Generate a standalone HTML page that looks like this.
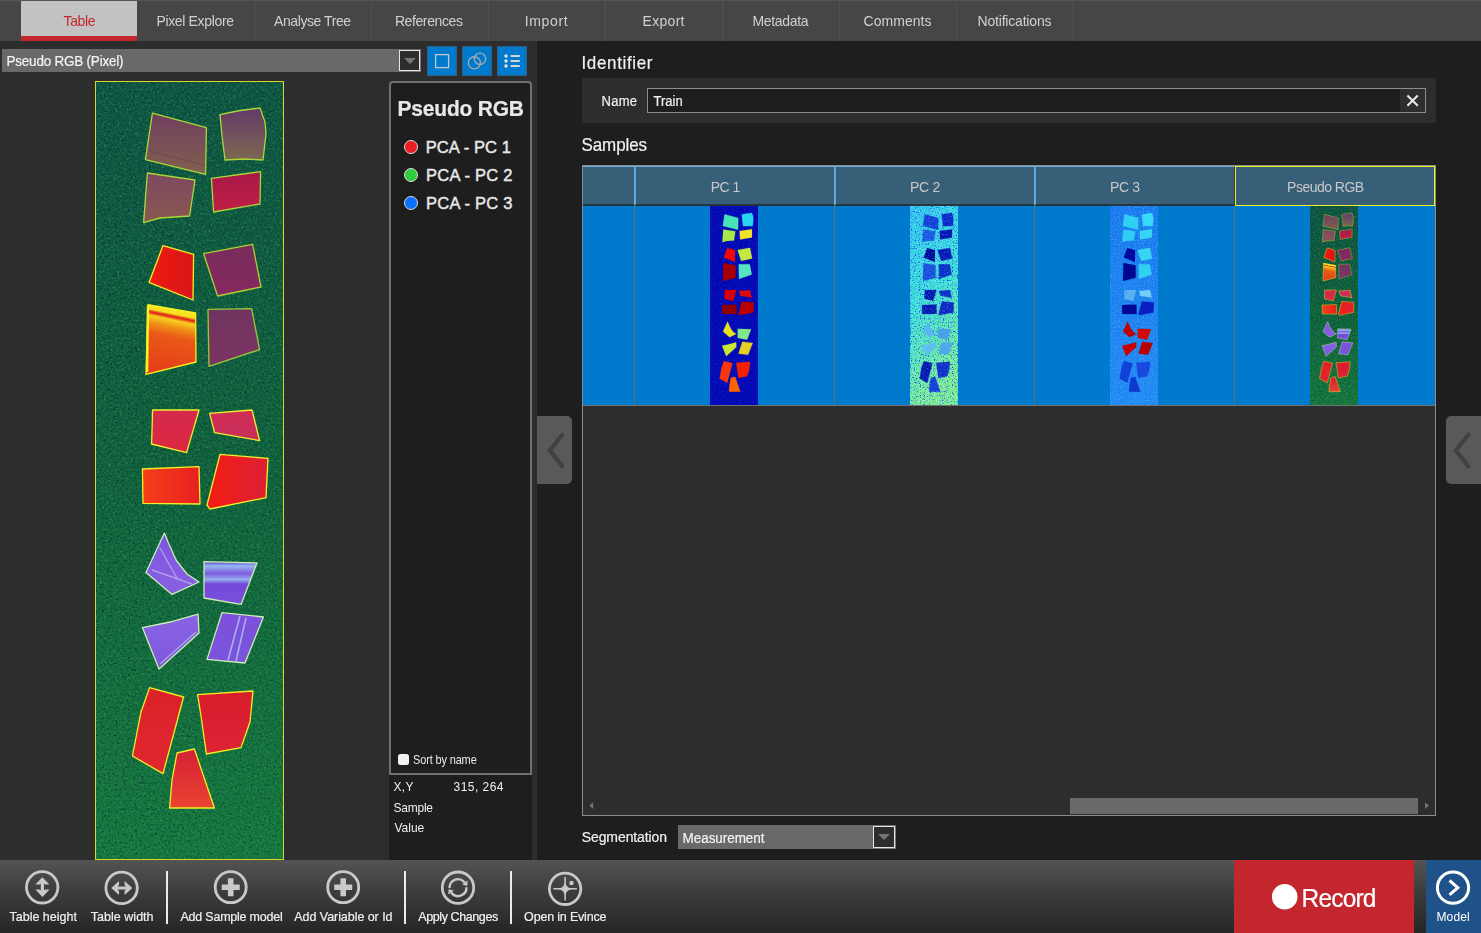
<!DOCTYPE html><html><head><meta charset="utf-8"><title>Table</title><style>
*{box-sizing:border-box;margin:0;padding:0}
html,body{width:1481px;height:933px;overflow:hidden;background:#1e1e1e}
body{position:relative;font-family:"Liberation Sans",sans-serif;color:#f0f0f0}
.a{position:absolute}
.t{position:absolute;white-space:pre;line-height:1;font-family:"Liberation Sans",sans-serif;-webkit-text-stroke:.2px}
#tabbar{left:0;top:0;width:1481px;height:41px;background:#464646;border-top:1px solid #555}
.tabsep{position:absolute;top:1px;width:1px;height:40px;background:#525252}
#tabsel{left:21px;top:1px;width:116px;height:40px;background:#c2c2c2;border-bottom:5px solid #c4262e}
#left{left:0;top:41px;width:537px;height:819px;background:#2d2d2d}
#dd1{left:2px;top:49px;width:419px;height:23px;background:#696969}
.ddbtn{position:absolute;background:#2d2d2d;border:1px solid #e6e6e6;box-shadow:1px 1px 0 #777}
.ddbtn i{position:absolute;left:50%;top:50%;margin:-3px 0 0 -6px;border-left:6px solid transparent;border-right:6px solid transparent;border-top:6px solid #747474;width:0;height:0}
.bb{position:absolute;top:46px;width:30px;height:30px;background:#007acc;border:1px solid #2f6088}
#legend{left:389px;top:81px;width:143px;height:694px;background:#1e1e1e;border:2px solid #707070;border-radius:4px 4px 0 0}
#info{left:389px;top:775px;width:143px;height:85px;background:#1e1e1e}
.dot{position:absolute;left:404px;width:14px;height:14px;border-radius:50%;border:1.5px solid #dcdcdc}
#chk{left:397.5px;top:753.8px;width:11.8px;height:11.5px;background:#f2f2f2;border-radius:2.5px}
.handle{position:absolute;top:416px;height:68px;width:35px;background:#595959}
#grp{left:582px;top:78px;width:854px;height:45px;background:#2d2d2d}
#inp{left:647px;top:88px;width:779px;height:25px;background:#1e1e1e;border:1px solid #8c8c8c}
#inpx{left:1400px;top:89px;width:25px;height:23px;background:#2d2d2d}
#tbl{left:582px;top:165px;width:854px;height:651px;background:#2d2d2d;border:1px solid #8c8c8c}
.hd{position:absolute;top:166px;height:40px;background:#385f78;border-top:1px solid #6cb2e4;border-left:2px solid #62aade;border-bottom:2px solid #27353f;border-right:1px solid #2a3f4e}
#row{left:583px;top:206px;width:852px;height:199px;background:#007acc}
#rowline{left:583px;top:405px;width:852px;height:1px;background:#707070}
.cs{position:absolute;top:206px;width:1px;height:199px;background:#6a6f74}
#sthumb{left:1070px;top:798px;width:348px;height:16px;background:#696969}
#dd2{left:678px;top:825px;width:218px;height:24px;background:#696969}
#tb{left:0;top:860px;width:1481px;height:73px;background:linear-gradient(#535353,#3c3c3c 45%,#252525)}
.sep{position:absolute;top:871px;width:2px;height:53px;background:#ececec}
#rec{left:1234px;top:860px;width:180px;height:73px;background:#c4262e}
#mod{left:1426px;top:860px;width:55px;height:73px;background:#1f5288}
svg{position:absolute;overflow:visible}
</style></head><body>
<div id="tabbar" class="a"></div><div id="tabsel" class="a"></div>
<div class="tabsep" style="left:254px"></div>
<div class="tabsep" style="left:371px"></div>
<div class="tabsep" style="left:488px"></div>
<div class="tabsep" style="left:605px"></div>
<div class="tabsep" style="left:722px"></div>
<div class="tabsep" style="left:839px"></div>
<div class="tabsep" style="left:956px"></div>
<div class="tabsep" style="left:1073px"></div>
<div id="left" class="a"></div><div id="dd1" class="a"></div>
<div class="ddbtn" style="left:399px;top:50px;width:21px;height:21px"><i></i></div>
<div class="bb" style="left:427px"></div><div class="bb" style="left:462px"></div><div class="bb" style="left:497px"></div>
<svg style="left:427px;top:46px" width="100" height="30" viewBox="427 46 100 30"><rect x="435.6" y="54.6" width="13" height="13" fill="none" stroke="#c4c8cc" stroke-width="1.3"/><circle cx="474.4" cy="62.8" r="6.1" fill="none" stroke="#a2a8ae" stroke-width="1.4"/><circle cx="480" cy="58.8" r="5.7" fill="none" stroke="#a2a8ae" stroke-width="1.4"/><g fill="#ece4d8"><circle cx="506" cy="56" r="1.7"/><circle cx="506" cy="61" r="1.7"/><circle cx="506" cy="66" r="1.7"/><rect x="510.6" y="55.1" width="9.2" height="1.8"/><rect x="510.6" y="60.1" width="9.2" height="1.8"/><rect x="510.6" y="65.1" width="9.2" height="1.8"/></g></svg>
<svg style="left:95px;top:81px" width="189" height="779" viewBox="95 81 189 779"><defs><linearGradient id="bgg" x1="0" y1="0" x2="0" y2="1"><stop offset="0" stop-color="#0e5443"/><stop offset="0.5" stop-color="#10623c"/><stop offset="1" stop-color="#167a3e"/></linearGradient><filter id="nz" x="0" y="0" width="100%" height="100%" color-interpolation-filters="sRGB"><feTurbulence type="fractalNoise" baseFrequency="0.45" numOctaves="2" seed="7"/><feColorMatrix type="matrix" values="0 0 0 0 0.2  0 0 0 0 0.6  0 0 0 0 0.34  1.9 0 0 0 -0.95"/></filter><filter id="nk" x="0" y="0" width="100%" height="100%" color-interpolation-filters="sRGB"><feTurbulence type="fractalNoise" baseFrequency="0.45" numOctaves="2" seed="31"/><feColorMatrix type="matrix" values="0 0 0 0 0.02  0 0 0 0 0.17  0 0 0 0 0.2  0 1.7 0 0 -0.85"/></filter><filter id="nd" x="0" y="0" width="100%" height="100%" color-interpolation-filters="sRGB"><feTurbulence type="fractalNoise" baseFrequency="0.85" numOctaves="1" seed="23"/><feColorMatrix type="matrix" values="0 0 0 0 0.03  0 0 0 0 0.06  0 0 0 0 0.28  0 0 14 0 -9.7"/></filter><linearGradient id="lm" x1="0" y1="0" x2="1" y2="0"><stop offset="0" stop-color="#fff"/><stop offset="0.3" stop-color="#fff" stop-opacity="0.8"/><stop offset="0.55" stop-color="#fff" stop-opacity="0.12"/><stop offset="1" stop-color="#fff" stop-opacity="0.1"/></linearGradient><mask id="mk"><rect x="95" y="81" width="189" height="779" fill="url(#lm)"/></mask><linearGradient id="g0" x1="0" y1="0" x2="0" y2="1"><stop offset="0" stop-color="#703e5e"/><stop offset="1" stop-color="#82604e"/></linearGradient><linearGradient id="g1" x1="0" y1="0" x2="0" y2="1"><stop offset="0" stop-color="#643a68"/><stop offset="1" stop-color="#7c6850"/></linearGradient><linearGradient id="g2" x1="0" y1="0" x2="0" y2="1"><stop offset="0" stop-color="#7e4860"/><stop offset="1" stop-color="#8a5850"/></linearGradient><linearGradient id="g3" x1="0" y1="0" x2="0" y2="1"><stop offset="0" stop-color="#a81848"/><stop offset="1" stop-color="#c02044"/></linearGradient><linearGradient id="g4" x1="0" y1="0" x2="1" y2="0"><stop offset="0" stop-color="#f01c10"/><stop offset="1" stop-color="#d81418"/></linearGradient><linearGradient id="g5" x1="0" y1="0" x2="0" y2="1"><stop offset="0" stop-color="#782c5a"/><stop offset="1" stop-color="#862860"/></linearGradient><linearGradient id="g6" x1="0.15" y1="0" x2="0" y2="1"><stop offset="0" stop-color="#f8e820"/><stop offset="0.07" stop-color="#f8e020"/><stop offset="0.11" stop-color="#e01818"/><stop offset="0.16" stop-color="#f8d020"/><stop offset="0.26" stop-color="#f09018"/><stop offset="0.4" stop-color="#ea5818"/><stop offset="1" stop-color="#e43a18"/></linearGradient><linearGradient id="g7" x1="0" y1="0" x2="0" y2="1"><stop offset="0" stop-color="#703460"/><stop offset="1" stop-color="#7c3462"/></linearGradient><linearGradient id="g8" x1="0" y1="0" x2="0" y2="1"><stop offset="0" stop-color="#d42a4c"/><stop offset="1" stop-color="#dc2840"/></linearGradient><linearGradient id="g9" x1="0" y1="0" x2="0" y2="1"><stop offset="0" stop-color="#d02c58"/><stop offset="1" stop-color="#c83058"/></linearGradient><linearGradient id="g10" x1="0" y1="0" x2="1" y2="0"><stop offset="0" stop-color="#f44018"/><stop offset="1" stop-color="#e82020"/></linearGradient><linearGradient id="g11" x1="0" y1="0" x2="1" y2="0"><stop offset="0" stop-color="#f41c14"/><stop offset="1" stop-color="#dc2034"/></linearGradient><linearGradient id="g12" x1="0" y1="0" x2="0" y2="1"><stop offset="0" stop-color="#7e54e0"/><stop offset="1" stop-color="#8a60e2"/></linearGradient><linearGradient id="g13" x1="0" y1="0" x2="0" y2="1"><stop offset="0" stop-color="#5838d0"/><stop offset="0.1" stop-color="#98b8f0"/><stop offset="0.28" stop-color="#7c5ce0"/><stop offset="0.42" stop-color="#98b0ec"/><stop offset="0.52" stop-color="#7448d8"/><stop offset="1" stop-color="#7a50dc"/></linearGradient><linearGradient id="g14" x1="0" y1="0" x2="0" y2="1"><stop offset="0" stop-color="#8a64e4"/><stop offset="1" stop-color="#7e56dc"/></linearGradient><linearGradient id="g15" x1="0" y1="0" x2="0" y2="1"><stop offset="0" stop-color="#7c50dc"/><stop offset="1" stop-color="#7a54dc"/></linearGradient><linearGradient id="g16" x1="0" y1="0" x2="0" y2="1"><stop offset="0" stop-color="#dc2028"/><stop offset="1" stop-color="#e02830"/></linearGradient><linearGradient id="g17" x1="0" y1="0" x2="0" y2="1"><stop offset="0" stop-color="#d81c2c"/><stop offset="1" stop-color="#dc2434"/></linearGradient><linearGradient id="g18" x1="0" y1="0" x2="0" y2="1"><stop offset="0" stop-color="#d42038"/><stop offset="1" stop-color="#ea4430"/></linearGradient></defs><rect x="95" y="81" width="189" height="779" fill="url(#bgg)"/><rect x="95" y="81" width="189" height="779" filter="url(#nz)"/><rect x="95" y="81" width="189" height="779" filter="url(#nk)"/><g mask="url(#mk)"><rect x="95" y="81" width="189" height="779" filter="url(#nd)"/></g><polygon points="152.4,113.2 206.4,127.6 205.6,174.4 145.4,159.6" fill="url(#g0)" stroke="#a8d838" stroke-width="1.3" stroke-linejoin="round"/><polygon points="220.0,114.6 240.0,110.5 260.0,108.0 265.0,122.0 266.0,134.0 263.0,160.0 245.0,159.0 225.0,160.0 222.0,136.0" fill="url(#g1)" stroke="#a8d838" stroke-width="1.3" stroke-linejoin="round"/><polygon points="147.4,173.0 195.0,180.0 189.6,216.0 160.0,218.0 143.6,222.6" fill="url(#g2)" stroke="#a8d838" stroke-width="1.3" stroke-linejoin="round"/><polygon points="211.4,178.4 260.6,171.6 260.0,204.0 213.6,212.0" fill="url(#g3)" stroke="#a8d838" stroke-width="1.3" stroke-linejoin="round"/><polygon points="163.0,245.6 193.6,254.4 193.0,300.0 149.0,282.4" fill="url(#g4)" stroke="#f0f020" stroke-width="1.3" stroke-linejoin="round"/><polygon points="203.6,253.6 252.6,244.4 261.0,287.0 217.6,296.0" fill="url(#g5)" stroke="#b0d030" stroke-width="1.3" stroke-linejoin="round"/><polygon points="148.0,304.6 195.6,313.0 196.0,362.0 146.0,374.4" fill="url(#g6)" stroke="#f8f020" stroke-width="1.3" stroke-linejoin="round"/><polygon points="208.0,309.4 251.6,308.6 259.6,349.6 209.0,366.4" fill="url(#g7)" stroke="#98c838" stroke-width="1.3" stroke-linejoin="round"/><polygon points="152.6,410.0 199.0,410.0 186.6,452.6 151.6,444.0" fill="url(#g8)" stroke="#f0f028" stroke-width="1.3" stroke-linejoin="round"/><polygon points="209.6,413.4 252.0,410.0 259.6,440.6 214.6,432.6" fill="url(#g9)" stroke="#f0f028" stroke-width="1.3" stroke-linejoin="round"/><polygon points="142.4,469.0 199.0,466.6 200.0,504.0 143.0,503.4" fill="url(#g10)" stroke="#f0f028" stroke-width="1.3" stroke-linejoin="round"/><polygon points="220.0,454.4 268.0,458.4 266.0,497.6 210.0,509.0 207.0,505.0" fill="url(#g11)" stroke="#f0f028" stroke-width="1.3" stroke-linejoin="round"/><polygon points="164.4,533.0 168.5,543.0 176.0,560.0 187.0,574.0 199.0,582.0 172.0,594.4 146.0,572.4" fill="url(#g12)" stroke="#c8f0b0" stroke-width="1.3" stroke-linejoin="round"/><polygon points="204.0,561.6 257.0,563.0 241.0,604.4 204.0,598.0" fill="url(#g13)" stroke="#c8f0b0" stroke-width="1.3" stroke-linejoin="round"/><polygon points="142.4,627.6 170.0,622.0 198.0,614.0 199.0,633.0 159.0,669.0" fill="url(#g14)" stroke="#c8f0b0" stroke-width="1.3" stroke-linejoin="round"/><polygon points="222.0,612.6 263.4,617.0 245.0,663.0 207.0,659.4" fill="url(#g15)" stroke="#c8f0b0" stroke-width="1.3" stroke-linejoin="round"/><polygon points="149.6,687.6 183.6,697.0 163.0,773.6 132.4,756.0 141.0,712.0" fill="url(#g16)" stroke="#f0f020" stroke-width="1.3" stroke-linejoin="round"/><polygon points="197.6,694.6 253.0,691.0 250.0,722.0 241.0,747.6 206.4,754.0 201.0,716.0" fill="url(#g17)" stroke="#f0f020" stroke-width="1.3" stroke-linejoin="round"/><polygon points="177.0,753.0 194.4,749.0 214.4,808.0 169.6,808.0 172.0,780.0" fill="url(#g18)" stroke="#f0f020" stroke-width="1.3" stroke-linejoin="round"/><path d="M148.5 150.5 L205 165.5" stroke="#6a4258" stroke-width="1.2" opacity=".7"/><path d="M148 306 L147 372" stroke="#f8f020" stroke-width="2.5"/><path d="M160 548 L178 580 M152 570 L192 584" stroke="#b8b0ec" stroke-width="1.4" opacity=".8"/><path d="M240 616 L228 660 M246 618 L236 661" stroke="#b0c0f0" stroke-width="1.6" opacity=".85"/><path d="M160 664 L196 632" stroke="#b0b8f0" stroke-width="1.3" opacity=".8"/><rect x="95.5" y="81.5" width="188" height="778" fill="none" stroke="#d8d820" stroke-width="1"/></svg>
<div id="legend" class="a"></div><div id="info" class="a"></div>
<div class="dot" style="top:139.7px;background:#ec1c24"></div>
<div class="dot" style="top:167.7px;background:#30cc40"></div>
<div class="dot" style="top:195.6px;background:#0a70ff"></div>
<div id="chk" class="a"></div>
<div class="handle" style="left:537px;border-radius:0 5px 5px 0"></div><div class="handle" style="left:1446px;border-radius:5px 0 0 5px"></div>
<svg style="left:537px;top:416px" width="35" height="68" viewBox="537 416 35 68"><path d="M562.4 434.8 L549.8 450.4 L562.4 466.4" fill="none" stroke="#414141" stroke-width="4.2" stroke-linecap="round" stroke-linejoin="miter"/></svg>
<svg style="left:1446px;top:416px" width="35" height="68" viewBox="1446 416 35 68"><path d="M1468.4 434.8 L1455.8 450.4 L1468.4 466.4" fill="none" stroke="#414141" stroke-width="4.2" stroke-linecap="round" stroke-linejoin="miter"/></svg>
<div id="grp" class="a"></div><div id="inp" class="a"></div><div id="inpx" class="a"></div>
<svg style="left:1400px;top:89px" width="25" height="23" viewBox="1400 89 25 23"><path d="M1407.4 95.4 L1417.8 105.8 M1417.8 95.4 L1407.4 105.8" stroke="#e6e6e6" stroke-width="2.1"/></svg>
<div id="tbl" class="a"></div>
<div class="hd" style="left:583px;width:52px;border-left:none"></div>
<div class="hd" style="left:634px;width:201px"></div>
<div class="hd" style="left:834px;width:201px"></div>
<div class="hd" style="left:1034px;width:201px"></div>
<div class="hd" style="left:1235px;width:200px;border:1px solid #f0f020"></div>
<div id="row" class="a"></div><div id="rowline" class="a"></div>
<div class="cs" style="left:634px"></div>
<div class="cs" style="left:834px"></div>
<div class="cs" style="left:1034px"></div>
<div class="cs" style="left:1234px"></div>
<svg style="left:710px;top:206px" width="48" height="199" viewBox="95 81 189 779" preserveAspectRatio="none"><defs><filter id="n1" x="0" y="0" width="100%" height="100%" color-interpolation-filters="sRGB"><feTurbulence type="fractalNoise" baseFrequency="0.2" numOctaves="1" seed="3"/><feColorMatrix type="matrix" values="0 0 0 0 0.1  0 0 0 0 0.22  0 0 0 0 0.9  1.6 0 0 0 -0.8"/></filter></defs><rect x="95" y="81" width="189" height="779" fill="#0309b2"/><rect x="95" y="81" width="189" height="779" filter="url(#n1)"/><polygon points="152.4,113.2 206.4,127.6 205.6,174.4 145.4,159.6" fill="#48e4b8" stroke="#48e4b8" stroke-width="0.6"/><polygon points="220.0,114.6 240.0,110.5 260.0,108.0 265.0,122.0 266.0,134.0 263.0,160.0 245.0,159.0 225.0,160.0 222.0,136.0" fill="#28d4f0" stroke="#28d4f0" stroke-width="0.6"/><polygon points="147.4,173.0 195.0,180.0 189.6,216.0 160.0,218.0 143.6,222.6" fill="#a8e848" stroke="#a8e848" stroke-width="0.6"/><polygon points="211.4,178.4 260.6,171.6 260.0,204.0 213.6,212.0" fill="#f0e428" stroke="#f0e428" stroke-width="0.6"/><polygon points="163.0,245.6 193.6,254.4 193.0,300.0 149.0,282.4" fill="#f00808" stroke="#f00808" stroke-width="0.6"/><polygon points="203.6,253.6 252.6,244.4 261.0,287.0 217.6,296.0" fill="#c4e840" stroke="#c4e840" stroke-width="0.6"/><polygon points="148.0,304.6 195.6,313.0 196.0,362.0 146.0,374.4" fill="#a80000" stroke="#a80000" stroke-width="0.6"/><polygon points="208.0,309.4 251.6,308.6 259.6,349.6 209.0,366.4" fill="#58e4c0" stroke="#58e4c0" stroke-width="0.6"/><polygon points="152.6,410.0 199.0,410.0 186.6,452.6 151.6,444.0" fill="#d80000" stroke="#d80000" stroke-width="0.6"/><polygon points="209.6,413.4 252.0,410.0 259.6,440.6 214.6,432.6" fill="#e00808" stroke="#e00808" stroke-width="0.6"/><polygon points="142.4,469.0 199.0,466.6 200.0,504.0 143.0,503.4" fill="#900000" stroke="#900000" stroke-width="0.6"/><polygon points="220.0,454.4 268.0,458.4 266.0,497.6 210.0,509.0 207.0,505.0" fill="#b80000" stroke="#b80000" stroke-width="0.6"/><polygon points="164.4,533.0 168.5,543.0 176.0,560.0 187.0,574.0 199.0,582.0 172.0,594.4 146.0,572.4" fill="#e8e020" stroke="#e8e020" stroke-width="0.6"/><polygon points="204.0,561.6 257.0,563.0 241.0,604.4 204.0,598.0" fill="#80e888" stroke="#80e888" stroke-width="0.6"/><polygon points="142.4,627.6 170.0,622.0 198.0,614.0 199.0,633.0 159.0,669.0" fill="#c8e838" stroke="#c8e838" stroke-width="0.6"/><polygon points="222.0,612.6 263.4,617.0 245.0,663.0 207.0,659.4" fill="#e4d020" stroke="#e4d020" stroke-width="0.6"/><polygon points="149.6,687.6 183.6,697.0 163.0,773.6 132.4,756.0 141.0,712.0" fill="#f83808" stroke="#f83808" stroke-width="0.6"/><polygon points="197.6,694.6 253.0,691.0 250.0,722.0 241.0,747.6 206.4,754.0 201.0,716.0" fill="#f02000" stroke="#f02000" stroke-width="0.6"/><polygon points="177.0,753.0 194.4,749.0 214.4,808.0 169.6,808.0 172.0,780.0" fill="#ff6400" stroke="#ff6400" stroke-width="0.6"/></svg>
<svg style="left:910px;top:206px" width="48" height="199" viewBox="95 81 189 779" preserveAspectRatio="none"><defs><linearGradient id="b2" x1="0" y1="0" x2="0.25" y2="1"><stop offset="0" stop-color="#30c8f0"/><stop offset="0.5" stop-color="#3ce2d6"/><stop offset="1" stop-color="#80f08c"/></linearGradient><filter id="n2a" x="0" y="0" width="100%" height="100%" color-interpolation-filters="sRGB"><feTurbulence type="fractalNoise" baseFrequency="0.2" numOctaves="1" seed="11"/><feColorMatrix type="matrix" values="0 0 0 0 0.72  0 0 0 0 1  0 0 0 0 1  2.4 0 0 0 -1.3"/></filter><filter id="n2b" x="0" y="0" width="100%" height="100%" color-interpolation-filters="sRGB"><feTurbulence type="fractalNoise" baseFrequency="0.2" numOctaves="1" seed="17"/><feColorMatrix type="matrix" values="0 0 0 0 0.08  0 0 0 0 0.3  0 0 0 0 0.9  0 5 0 0 -2.75"/></filter><filter id="n2c" x="0" y="0" width="100%" height="100%" color-interpolation-filters="sRGB"><feTurbulence type="fractalNoise" baseFrequency="0.2" numOctaves="1" seed="19"/><feColorMatrix type="matrix" values="0 0 0 0 0.3  0 0 0 0 0.7  0 0 0 0 0.98  0 0 2.2 0 -1.2"/></filter></defs><rect x="95" y="81" width="189" height="779" fill="url(#b2)"/><rect x="95" y="81" width="189" height="779" filter="url(#n2a)"/><rect x="95" y="81" width="189" height="779" filter="url(#n2b)"/><polygon points="152.4,113.2 206.4,127.6 205.6,174.4 145.4,159.6" fill="#1440d8" stroke="#1440d8" stroke-width="0.6"/><polygon points="220.0,114.6 240.0,110.5 260.0,108.0 265.0,122.0 266.0,134.0 263.0,160.0 245.0,159.0 225.0,160.0 222.0,136.0" fill="#0c28c8" stroke="#0c28c8" stroke-width="0.6"/><polygon points="147.4,173.0 195.0,180.0 189.6,216.0 160.0,218.0 143.6,222.6" fill="#1c58e4" stroke="#1c58e4" stroke-width="0.6"/><polygon points="211.4,178.4 260.6,171.6 260.0,204.0 213.6,212.0" fill="#0614b0" stroke="#0614b0" stroke-width="0.6"/><polygon points="163.0,245.6 193.6,254.4 193.0,300.0 149.0,282.4" fill="#000698" stroke="#000698" stroke-width="0.6"/><polygon points="203.6,253.6 252.6,244.4 261.0,287.0 217.6,296.0" fill="#0618b4" stroke="#0618b4" stroke-width="0.6"/><polygon points="148.0,304.6 195.6,313.0 196.0,362.0 146.0,374.4" fill="#1c50dc" stroke="#1c50dc" stroke-width="0.6"/><polygon points="208.0,309.4 251.6,308.6 259.6,349.6 209.0,366.4" fill="#0c30c8" stroke="#0c30c8" stroke-width="0.6"/><polygon points="152.6,410.0 199.0,410.0 186.6,452.6 151.6,444.0" fill="#0818b0" stroke="#0818b0" stroke-width="0.6"/><polygon points="209.6,413.4 252.0,410.0 259.6,440.6 214.6,432.6" fill="#1030c8" stroke="#1030c8" stroke-width="0.6"/><polygon points="142.4,469.0 199.0,466.6 200.0,504.0 143.0,503.4" fill="#0818b0" stroke="#0818b0" stroke-width="0.6"/><polygon points="220.0,454.4 268.0,458.4 266.0,497.6 210.0,509.0 207.0,505.0" fill="#1028c0" stroke="#1028c0" stroke-width="0.6"/><polygon points="164.4,533.0 168.5,543.0 176.0,560.0 187.0,574.0 199.0,582.0 172.0,594.4 146.0,572.4" fill="#58b8f0" stroke="#58b8f0" stroke-width="0.6"/><polygon points="204.0,561.6 257.0,563.0 241.0,604.4 204.0,598.0" fill="#48a0e8" stroke="#48a0e8" stroke-width="0.6"/><polygon points="142.4,627.6 170.0,622.0 198.0,614.0 199.0,633.0 159.0,669.0" fill="#60c0f0" stroke="#60c0f0" stroke-width="0.6"/><polygon points="222.0,612.6 263.4,617.0 245.0,663.0 207.0,659.4" fill="#50a8e8" stroke="#50a8e8" stroke-width="0.6"/><polygon points="149.6,687.6 183.6,697.0 163.0,773.6 132.4,756.0 141.0,712.0" fill="#0818b0" stroke="#0818b0" stroke-width="0.6"/><polygon points="197.6,694.6 253.0,691.0 250.0,722.0 241.0,747.6 206.4,754.0 201.0,716.0" fill="#1030c8" stroke="#1030c8" stroke-width="0.6"/><polygon points="177.0,753.0 194.4,749.0 214.4,808.0 169.6,808.0 172.0,780.0" fill="#1840d8" stroke="#1840d8" stroke-width="0.6"/><rect x="95" y="81" width="189" height="779" filter="url(#n2c)"/></svg>
<svg style="left:1110px;top:206px" width="48" height="199" viewBox="95 81 189 779" preserveAspectRatio="none"><defs><linearGradient id="b3" x1="0" y1="0" x2="0" y2="1"><stop offset="0" stop-color="#1678ec"/><stop offset="1" stop-color="#2088f2"/></linearGradient><filter id="n3" x="0" y="0" width="100%" height="100%" color-interpolation-filters="sRGB"><feTurbulence type="fractalNoise" baseFrequency="0.2" numOctaves="1" seed="5"/><feColorMatrix type="matrix" values="0 0 0 0 0.36  0 0 0 0 0.72  0 0 0 0 1  2.2 0 0 0 -1.1"/></filter></defs><rect x="95" y="81" width="189" height="779" fill="url(#b3)"/><rect x="95" y="81" width="189" height="779" filter="url(#n3)"/><polygon points="152.4,113.2 206.4,127.6 205.6,174.4 145.4,159.6" fill="#30d0f4" stroke="#30d0f4" stroke-width="0.6"/><polygon points="220.0,114.6 240.0,110.5 260.0,108.0 265.0,122.0 266.0,134.0 263.0,160.0 245.0,159.0 225.0,160.0 222.0,136.0" fill="#38d8f8" stroke="#38d8f8" stroke-width="0.6"/><polygon points="147.4,173.0 195.0,180.0 189.6,216.0 160.0,218.0 143.6,222.6" fill="#30ccf4" stroke="#30ccf4" stroke-width="0.6"/><polygon points="211.4,178.4 260.6,171.6 260.0,204.0 213.6,212.0" fill="#38d4f4" stroke="#38d4f4" stroke-width="0.6"/><polygon points="163.0,245.6 193.6,254.4 193.0,300.0 149.0,282.4" fill="#0008a0" stroke="#0008a0" stroke-width="0.6"/><polygon points="203.6,253.6 252.6,244.4 261.0,287.0 217.6,296.0" fill="#38d4f0" stroke="#38d4f0" stroke-width="0.6"/><polygon points="148.0,304.6 195.6,313.0 196.0,362.0 146.0,374.4" fill="#000890" stroke="#000890" stroke-width="0.6"/><polygon points="208.0,309.4 251.6,308.6 259.6,349.6 209.0,366.4" fill="#30d0f0" stroke="#30d0f0" stroke-width="0.6"/><polygon points="152.6,410.0 199.0,410.0 186.6,452.6 151.6,444.0" fill="#58b0f0" stroke="#58b0f0" stroke-width="0.6"/><polygon points="209.6,413.4 252.0,410.0 259.6,440.6 214.6,432.6" fill="#70d0f8" stroke="#70d0f8" stroke-width="0.6"/><polygon points="142.4,469.0 199.0,466.6 200.0,504.0 143.0,503.4" fill="#000898" stroke="#000898" stroke-width="0.6"/><polygon points="220.0,454.4 268.0,458.4 266.0,497.6 210.0,509.0 207.0,505.0" fill="#0820c0" stroke="#0820c0" stroke-width="0.6"/><polygon points="164.4,533.0 168.5,543.0 176.0,560.0 187.0,574.0 199.0,582.0 172.0,594.4 146.0,572.4" fill="#c00000" stroke="#c00000" stroke-width="0.6"/><polygon points="204.0,561.6 257.0,563.0 241.0,604.4 204.0,598.0" fill="#d00808" stroke="#d00808" stroke-width="0.6"/><polygon points="142.4,627.6 170.0,622.0 198.0,614.0 199.0,633.0 159.0,669.0" fill="#c80000" stroke="#c80000" stroke-width="0.6"/><polygon points="222.0,612.6 263.4,617.0 245.0,663.0 207.0,659.4" fill="#b80000" stroke="#b80000" stroke-width="0.6"/><polygon points="149.6,687.6 183.6,697.0 163.0,773.6 132.4,756.0 141.0,712.0" fill="#1040d8" stroke="#1040d8" stroke-width="0.6"/><polygon points="197.6,694.6 253.0,691.0 250.0,722.0 241.0,747.6 206.4,754.0 201.0,716.0" fill="#1848e0" stroke="#1848e0" stroke-width="0.6"/><polygon points="177.0,753.0 194.4,749.0 214.4,808.0 169.6,808.0 172.0,780.0" fill="#0c38d0" stroke="#0c38d0" stroke-width="0.6"/></svg>
<svg style="left:1310px;top:206px" width="48" height="199" viewBox="95 81 189 779" preserveAspectRatio="none"><defs><filter id="n4a" x="0" y="0" width="100%" height="100%" color-interpolation-filters="sRGB"><feTurbulence type="fractalNoise" baseFrequency="0.2" numOctaves="1" seed="9"/><feColorMatrix type="matrix" values="0 0 0 0 0.2  0 0 0 0 0.6  0 0 0 0 0.34  1.9 0 0 0 -0.95"/></filter><filter id="n4b" x="0" y="0" width="100%" height="100%" color-interpolation-filters="sRGB"><feTurbulence type="fractalNoise" baseFrequency="0.2" numOctaves="1" seed="13"/><feColorMatrix type="matrix" values="0 0 0 0 0.02  0 0 0 0 0.17  0 0 0 0 0.2  0 2.2 0 0 -1.1"/></filter></defs><rect x="95" y="81" width="189" height="779" fill="url(#bgg)"/><rect x="95" y="81" width="189" height="779" filter="url(#n4a)"/><rect x="95" y="81" width="189" height="779" filter="url(#n4b)"/><polygon points="152.4,113.2 206.4,127.6 205.6,174.4 145.4,159.6" fill="url(#g0)" stroke="#a8d838" stroke-width="1.6"/><polygon points="220.0,114.6 240.0,110.5 260.0,108.0 265.0,122.0 266.0,134.0 263.0,160.0 245.0,159.0 225.0,160.0 222.0,136.0" fill="url(#g1)" stroke="#a8d838" stroke-width="1.6"/><polygon points="147.4,173.0 195.0,180.0 189.6,216.0 160.0,218.0 143.6,222.6" fill="url(#g2)" stroke="#a8d838" stroke-width="1.6"/><polygon points="211.4,178.4 260.6,171.6 260.0,204.0 213.6,212.0" fill="url(#g3)" stroke="#a8d838" stroke-width="1.6"/><polygon points="163.0,245.6 193.6,254.4 193.0,300.0 149.0,282.4" fill="url(#g4)" stroke="#f0f020" stroke-width="1.6"/><polygon points="203.6,253.6 252.6,244.4 261.0,287.0 217.6,296.0" fill="url(#g5)" stroke="#b0d030" stroke-width="1.6"/><polygon points="148.0,304.6 195.6,313.0 196.0,362.0 146.0,374.4" fill="url(#g6)" stroke="#f8f020" stroke-width="1.6"/><polygon points="208.0,309.4 251.6,308.6 259.6,349.6 209.0,366.4" fill="url(#g7)" stroke="#98c838" stroke-width="1.6"/><polygon points="152.6,410.0 199.0,410.0 186.6,452.6 151.6,444.0" fill="url(#g8)" stroke="#f0f028" stroke-width="1.6"/><polygon points="209.6,413.4 252.0,410.0 259.6,440.6 214.6,432.6" fill="url(#g9)" stroke="#f0f028" stroke-width="1.6"/><polygon points="142.4,469.0 199.0,466.6 200.0,504.0 143.0,503.4" fill="url(#g10)" stroke="#f0f028" stroke-width="1.6"/><polygon points="220.0,454.4 268.0,458.4 266.0,497.6 210.0,509.0 207.0,505.0" fill="url(#g11)" stroke="#f0f028" stroke-width="1.6"/><polygon points="164.4,533.0 168.5,543.0 176.0,560.0 187.0,574.0 199.0,582.0 172.0,594.4 146.0,572.4" fill="url(#g12)" stroke="#c8f0b0" stroke-width="1.6"/><polygon points="204.0,561.6 257.0,563.0 241.0,604.4 204.0,598.0" fill="url(#g13)" stroke="#c8f0b0" stroke-width="1.6"/><polygon points="142.4,627.6 170.0,622.0 198.0,614.0 199.0,633.0 159.0,669.0" fill="url(#g14)" stroke="#c8f0b0" stroke-width="1.6"/><polygon points="222.0,612.6 263.4,617.0 245.0,663.0 207.0,659.4" fill="url(#g15)" stroke="#c8f0b0" stroke-width="1.6"/><polygon points="149.6,687.6 183.6,697.0 163.0,773.6 132.4,756.0 141.0,712.0" fill="url(#g16)" stroke="#f0f020" stroke-width="1.6"/><polygon points="197.6,694.6 253.0,691.0 250.0,722.0 241.0,747.6 206.4,754.0 201.0,716.0" fill="url(#g17)" stroke="#f0f020" stroke-width="1.6"/><polygon points="177.0,753.0 194.4,749.0 214.4,808.0 169.6,808.0 172.0,780.0" fill="url(#g18)" stroke="#f0f020" stroke-width="1.6"/></svg>
<div id="sthumb" class="a"></div>
<svg style="left:583px;top:798px" width="852" height="17" viewBox="583 798 852 17"><path d="M593.2 802.2 L593.2 809 L589.2 805.6 Z M1425 802.2 L1425 809 L1429 805.6 Z" fill="#727272"/></svg>
<div id="dd2" class="a"></div><div class="ddbtn" style="left:873px;top:826px;width:22px;height:22px"><i></i></div>
<div id="tb" class="a"></div>
<div class="sep" style="left:166px"></div>
<div class="sep" style="left:404px"></div>
<div class="sep" style="left:510px"></div>
<div id="rec" class="a"></div><div id="mod" class="a"></div>
<svg style="left:0;top:860px" width="1481" height="73" viewBox="0 860 1481 73"><circle cx="42.2" cy="887.3" r="15.7" fill="none" stroke="#c9c9c9" stroke-width="2.8"/><g fill="#c9c9c9"><path d="M42.4 877.3 L49.4 884.6 L45.2 884.6 L44 883.4 L44 890.6 L45.2 889.4 L49.4 889.4 L42.4 897 L35.4 889.4 L39.6 889.4 L40.8 890.6 L40.8 883.4 L39.6 884.6 L35.4 884.6 Z"/></g><circle cx="121.6" cy="887.9" r="15.7" fill="none" stroke="#c9c9c9" stroke-width="2.8"/><g fill="#c9c9c9"><path d="M111.3 888 L119 880.9 L119 885.1 L117.7 886.4 L125.9 886.4 L124.6 885.1 L124.6 880.9 L132.3 888 L124.6 895.1 L124.6 890.9 L125.9 889.6 L117.7 889.6 L119 890.9 L119 895.1 Z"/></g><circle cx="230.7" cy="887.2" r="15.5" fill="none" stroke="#c9c9c9" stroke-width="2.8"/><path d="M221.7 887.3 H239.7 M230.7 878.3 V896.3" stroke="#c9c9c9" stroke-width="5.6" fill="none"/><circle cx="343.2" cy="887.2" r="15.5" fill="none" stroke="#c9c9c9" stroke-width="2.8"/><path d="M334.2 887.3 H352.2 M343.2 878.3 V896.3" stroke="#c9c9c9" stroke-width="5.6" fill="none"/><circle cx="458" cy="887.7" r="15.7" fill="none" stroke="#c9c9c9" stroke-width="2.8"/><g fill="none" stroke="#c9c9c9" stroke-width="2.5"><path d="M449.6 888.2 A8.4 8.4 0 0 1 464.9 882.8"/><path d="M466.4 887.2 A8.4 8.4 0 0 1 451.1 892.4"/></g><g fill="#c9c9c9"><path d="M467.2 886 L467.9 880.6 L462.1 884.6 Z"/><path d="M448.8 889.3 L448.1 894.6 L453.9 890.6 Z"/></g><circle cx="565.1" cy="888.8" r="15.7" fill="none" stroke="#c9c9c9" stroke-width="2.8"/><path d="M565.1 877.1999999999999 Q563.8000000000001 890.0999999999999 576.7 888.8 Q563.8000000000001 887.5 565.1 900.4 Q566.4 887.5 553.5 888.8 Q566.4 890.0999999999999 565.1 877.1999999999999 Z" fill="#c9c9c9"/><path d="M565.1 877.0 V900.5999999999999 M553.3000000000001 888.8 H576.9" stroke="#c9c9c9" stroke-width="1.5"/><circle cx="571.5" cy="883" r="2.2" fill="#c9c9c9"/><circle cx="1284.7" cy="896.8" r="12.8" fill="#fff"/><circle cx="1453" cy="887.7" r="15.6" fill="none" stroke="#fff" stroke-width="3"/><path d="M1449.5 880.5 L1457.8 887.7 L1449.5 894.9" fill="none" stroke="#fff" stroke-width="3"/></svg>
<span class="t" id="t0" style="left:63.50px;top:14.15px;font-size:14px;letter-spacing:-0.367px;color:#c4262e;font-weight:400;transform:scaleY(1.08);transform-origin:0 84.65%;-webkit-text-stroke:0">Table</span>
<span class="t" id="t1" style="left:156.40px;top:14.15px;font-size:14px;letter-spacing:-0.334px;color:#d0d0d0;font-weight:400;transform:scaleY(1.08);transform-origin:0 84.65%;-webkit-text-stroke:0">Pixel Explore</span>
<span class="t" id="t2" style="left:274.10px;top:14.15px;font-size:14px;letter-spacing:-0.429px;color:#d0d0d0;font-weight:400;transform:scaleY(1.08);transform-origin:0 84.65%;-webkit-text-stroke:0">Analyse Tree</span>
<span class="t" id="t3" style="left:394.90px;top:14.15px;font-size:14px;letter-spacing:-0.399px;color:#d0d0d0;font-weight:400;transform:scaleY(1.08);transform-origin:0 84.65%;-webkit-text-stroke:0">References</span>
<span class="t" id="t4" style="left:524.70px;top:14.15px;font-size:14px;letter-spacing:0.662px;color:#d0d0d0;font-weight:400;transform:scaleY(1.08);transform-origin:0 84.65%;-webkit-text-stroke:0">Import</span>
<span class="t" id="t5" style="left:642.50px;top:14.15px;font-size:14px;letter-spacing:0.306px;color:#d0d0d0;font-weight:400;transform:scaleY(1.08);transform-origin:0 84.65%;-webkit-text-stroke:0">Export</span>
<span class="t" id="t6" style="left:752.50px;top:14.15px;font-size:14px;letter-spacing:-0.339px;color:#d0d0d0;font-weight:400;transform:scaleY(1.08);transform-origin:0 84.65%;-webkit-text-stroke:0">Metadata</span>
<span class="t" id="t7" style="left:863.50px;top:14.15px;font-size:14px;letter-spacing:0.045px;color:#d0d0d0;font-weight:400;transform:scaleY(1.08);transform-origin:0 84.65%;-webkit-text-stroke:0">Comments</span>
<span class="t" id="t8" style="left:977.50px;top:14.15px;font-size:14px;letter-spacing:-0.189px;color:#d0d0d0;font-weight:400;transform:scaleY(1.08);transform-origin:0 84.65%;-webkit-text-stroke:0">Notifications</span>
<span class="t" id="t9" style="left:6.50px;top:54.67px;font-size:13.5px;letter-spacing:-0.223px;color:#f4f4f4;font-weight:400;transform:scaleY(1.08);transform-origin:0 84.65%">Pseudo RGB (Pixel)</span>
<span class="t" id="t10" style="left:397.50px;top:97.52px;font-size:21px;letter-spacing:-0.201px;color:#e8e8e8;font-weight:700;transform:scaleY(1.05);transform-origin:0 84.65%">Pseudo RGB</span>
<span class="t" id="t11" style="left:425.70px;top:138.73px;font-size:16.5px;letter-spacing:0.097px;color:#e8e8e8;font-weight:400;-webkit-text-stroke:.45px">PCA - PC 1</span>
<span class="t" id="t12" style="left:426.00px;top:166.83px;font-size:16.5px;letter-spacing:0.236px;color:#e8e8e8;font-weight:400;-webkit-text-stroke:.45px">PCA - PC 2</span>
<span class="t" id="t13" style="left:426.00px;top:194.73px;font-size:16.5px;letter-spacing:0.236px;color:#e8e8e8;font-weight:400;-webkit-text-stroke:.45px">PCA - PC 3</span>
<span class="t" id="t14" style="left:413.00px;top:754.84px;font-size:11px;letter-spacing:-0.152px;color:#e8e8e8;font-weight:400;transform:scaleY(1.08);transform-origin:0 84.65%;-webkit-text-stroke:0">Sort by name</span>
<span class="t" id="t15" style="left:393.50px;top:781.04px;font-size:12px;letter-spacing:0.328px;color:#f0f0f0;font-weight:400;transform:scaleY(1.08);transform-origin:0 84.65%;-webkit-text-stroke:0">X,Y</span>
<span class="t" id="t16" style="left:453.50px;top:781.04px;font-size:12px;letter-spacing:0.469px;color:#f0f0f0;font-weight:400;transform:scaleY(1.08);transform-origin:0 84.65%;-webkit-text-stroke:0">315, 264</span>
<span class="t" id="t17" style="left:393.50px;top:801.84px;font-size:12px;letter-spacing:-0.228px;color:#f0f0f0;font-weight:400;transform:scaleY(1.08);transform-origin:0 84.65%;-webkit-text-stroke:0">Sample</span>
<span class="t" id="t18" style="left:394.50px;top:821.84px;font-size:12px;letter-spacing:-0.016px;color:#f0f0f0;font-weight:400;transform:scaleY(1.08);transform-origin:0 84.65%;-webkit-text-stroke:0">Value</span>
<span class="t" id="t19" style="left:581.50px;top:54.61px;font-size:17px;letter-spacing:0.644px;color:#f0f0f0;font-weight:400;transform:scaleY(1.08);transform-origin:0 84.65%">Identifier</span>
<span class="t" id="t20" style="left:601.50px;top:94.85px;font-size:13px;letter-spacing:0.254px;color:#f0f0f0;font-weight:400;transform:scaleY(1.08);transform-origin:0 84.65%">Name</span>
<span class="t" id="t21" style="left:653.50px;top:94.85px;font-size:13px;letter-spacing:0.027px;color:#f0f0f0;font-weight:400;transform:scaleY(1.08);transform-origin:0 84.65%">Train</span>
<span class="t" id="t22" style="left:581.50px;top:136.51px;font-size:17px;letter-spacing:-0.090px;color:#f0f0f0;font-weight:400;transform:scaleY(1.08);transform-origin:0 84.65%">Samples</span>
<span class="t" id="t23" style="left:710.70px;top:180.15px;font-size:14px;letter-spacing:-0.508px;color:#c8c8c8;font-weight:400;transform:scaleY(1.08);transform-origin:0 84.65%;-webkit-text-stroke:0">PC 1</span>
<span class="t" id="t24" style="left:910.10px;top:180.15px;font-size:14px;letter-spacing:-0.308px;color:#c8c8c8;font-weight:400;transform:scaleY(1.08);transform-origin:0 84.65%;-webkit-text-stroke:0">PC 2</span>
<span class="t" id="t25" style="left:1109.90px;top:180.15px;font-size:14px;letter-spacing:-0.308px;color:#c8c8c8;font-weight:400;transform:scaleY(1.08);transform-origin:0 84.65%;-webkit-text-stroke:0">PC 3</span>
<span class="t" id="t26" style="left:1287.10px;top:180.15px;font-size:14px;letter-spacing:-0.524px;color:#c8c8c8;font-weight:400;transform:scaleY(1.08);transform-origin:0 84.65%;-webkit-text-stroke:0">Pseudo RGB</span>
<span class="t" id="t27" style="left:581.75px;top:830.15px;font-size:14px;letter-spacing:-0.096px;color:#f0f0f0;font-weight:400;transform:scaleY(1.08);transform-origin:0 84.65%">Segmentation</span>
<span class="t" id="t28" style="left:682.60px;top:831.57px;font-size:13.5px;letter-spacing:-0.065px;color:#f4f4f4;font-weight:400;transform:scaleY(1.08);transform-origin:0 84.65%">Measurement</span>
<span class="t" id="t29" style="left:9.50px;top:910.67px;font-size:12.5px;letter-spacing:0.003px;color:#f0f0f0;font-weight:400;transform:scaleY(1.08);transform-origin:0 84.65%">Table height</span>
<span class="t" id="t30" style="left:90.70px;top:910.67px;font-size:12.5px;letter-spacing:0.035px;color:#f0f0f0;font-weight:400;transform:scaleY(1.08);transform-origin:0 84.65%">Table width</span>
<span class="t" id="t31" style="left:180.50px;top:910.67px;font-size:12.5px;letter-spacing:-0.228px;color:#f0f0f0;font-weight:400;transform:scaleY(1.08);transform-origin:0 84.65%">Add Sample model</span>
<span class="t" id="t32" style="left:294.30px;top:910.67px;font-size:12.5px;letter-spacing:-0.055px;color:#f0f0f0;font-weight:400;transform:scaleY(1.08);transform-origin:0 84.65%">Add Variable or Id</span>
<span class="t" id="t33" style="left:418.30px;top:910.67px;font-size:12.5px;letter-spacing:-0.407px;color:#f0f0f0;font-weight:400;transform:scaleY(1.08);transform-origin:0 84.65%">Apply Changes</span>
<span class="t" id="t34" style="left:524.10px;top:910.67px;font-size:12.5px;letter-spacing:-0.183px;color:#f0f0f0;font-weight:400;transform:scaleY(1.08);transform-origin:0 84.65%">Open in Evince</span>
<span class="t" id="t35" style="left:1301.50px;top:886.56px;font-size:24.5px;letter-spacing:-0.797px;color:#ffffff;font-weight:400;transform:scaleY(1.08);transform-origin:0 84.65%">Record</span>
<span class="t" id="t36" style="left:1436.50px;top:910.54px;font-size:12px;letter-spacing:0.128px;color:#ffffff;font-weight:400;transform:scaleY(1.08);transform-origin:0 84.65%;-webkit-text-stroke:0">Model</span>
</body></html>
